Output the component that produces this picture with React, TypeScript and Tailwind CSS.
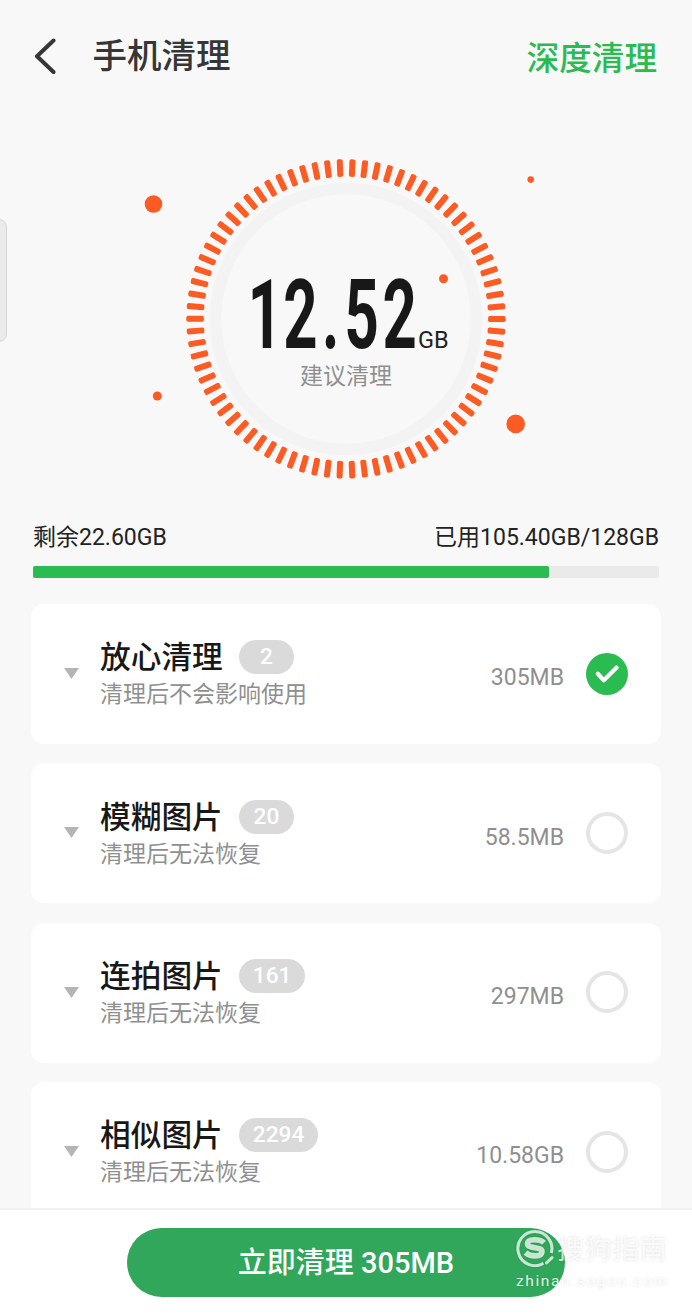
import React from "react";

type Item = {
  title: string;
  count: number;
  note: string;
  size: string;
  checked?: boolean;
};

const items: Item[] = [
  { title: "放心清理", count: 2, note: "清理后不会影响使用", size: "305MB", checked: true },
  { title: "模糊图片", count: 20, note: "清理后无法恢复", size: "58.5MB" },
  { title: "连拍图片", count: 161, note: "清理后无法恢复", size: "297MB" },
  { title: "相似图片", count: 2294, note: "清理后无法恢复", size: "10.58GB" },
];

const TICKS = 78;
const DOTS = [
  [153.5, 204, 8.8],
  [530.7, 179.6, 3.3],
  [443.5, 278.8, 4.5],
  [157.3, 396, 4.5],
  [515.7, 423.9, 9.3],
];

function Gauge() {
  return (
    <svg className="block h-[398px] w-full" viewBox="0 112 692 398">
      <circle cx="346" cy="319" r="130.5" fill="none" stroke="#f3f3f3" strokeWidth="11.5" />
      {Array.from({ length: TICKS }, (_, i) => (
        <rect
          key={i}
          x="488.1"
          y="316"
          width="17.6"
          height="6"
          rx="1.8"
          fill="#fc5b23"
          transform={`rotate(${(i * 360) / TICKS} 346 318.9)`}
        />
      ))}
      {DOTS.map(([x, y, r]) => (
        <circle key={`${x}`} cx={x} cy={y} r={r} fill="#fc5b23" />
      ))}
      <text
        transform="translate(0 347.8) scale(0.62 1)"
        x="399.5 457 519.5 555.5 617"
        y="0"
        fontSize="96.5"
        fontWeight="700"
        fill="#181818"
      >
        12.52
      </text>
      <text x="418" y="347.5" fontSize="23.5" fill="#222222">
        GB
      </text>
      <text x="346" y="384" fontSize="23" textAnchor="middle" fill="#8f8f8f">
        建议清理
      </text>
    </svg>
  );
}

function Check({ checked }: { checked?: boolean }) {
  if (!checked) {
    return <span className="-mt-px block size-[42px] rounded-full border-4 border-[#e5e5e5]" />;
  }
  return (
    <svg className="size-[42px]" viewBox="0 0 42 42">
      <circle cx="21" cy="21" r="21" fill="#2abb51" />
      <path
        d="M11.8 20.8 17.8 27.2 30.6 14.6"
        fill="none"
        stroke="white"
        strokeWidth="4.2"
        strokeLinecap="round"
        strokeLinejoin="round"
      />
    </svg>
  );
}

function Card({ item }: { item: Item }) {
  return (
    <li className="flex h-[140px] shrink-0 items-center rounded-[13px] bg-white pr-[33px] pl-[33px]">
      <svg className="-mt-px h-[11px] w-[15px]" viewBox="0 0 15 11">
        <path d="M0 0H15L7.5 11Z" fill="#b5b5b5" />
      </svg>
      <div className="ml-[21px] flex flex-col pt-[2.6px]">
        <div className="flex h-[34px] items-center">
          <h2 className="pt-[2px] text-[30.7px] leading-[34px] font-medium text-[#181818]">{item.title}</h2>
          <span className="ml-[16px] flex h-[34px] min-w-[55.5px] items-center justify-center rounded-full bg-[#dadada] px-[14px] text-[22.7px] leading-[34px] font-medium text-white">
            {item.count}
          </span>
        </div>
        <p className="mt-[6px] text-[23px] leading-[30px] text-[#8f8f8f]">{item.note}</p>
      </div>
      <span className="mt-[8.5px] mr-[22px] ml-auto text-[23px] leading-[30px] text-[#8f8f8f]">
        {item.size}
      </span>
      <Check checked={item.checked} />
    </li>
  );
}

function Watermark() {
  return (
    <div className="absolute top-[19px] left-[516px] flex flex-col text-white/75 [text-shadow:0_0_3px_rgba(0,0,0,0.13)]">
      <div className="flex h-[38px] items-center gap-[3px]">
        <svg className="size-[38px] drop-shadow-[0_0_1px_rgba(0,0,0,0.15)]" viewBox="0 0 38 38" fill="none" stroke="currentColor">
          <path d="M27.5 34.2A17 17 0 1 1 35.3 24" strokeWidth="3" />
          <path d="M30.5 33.8 36 28.6" strokeWidth="3" strokeLinecap="round" />
          <path d="M28 13.8C24 9.8 11.5 9.5 11.5 14.8C11.5 20.3 26.5 17 26 22.8C25.5 28.5 14 27.8 9.5 23.6" strokeWidth="5.6" />
        </svg>
        <span className="pt-[3px] text-[27.5px] leading-[38px]">搜狗指南</span>
      </div>
      <span className="mt-[3px] text-[15.5px] leading-[22px] tracking-[1.6px] text-white/85">zhinan.sogou.com</span>
    </div>
  );
}

export default function App() {
  return (
    <div className="relative flex h-[1316px] w-[692px] flex-col overflow-hidden bg-[#f8f8f8] font-['Roboto','Noto_Sans_CJK_SC',sans-serif]">
      <header className="flex h-[112px] shrink-0 items-center pr-[35px] pl-[34px]">
        <svg className="h-9 w-6" viewBox="0 0 24 36" fill="none">
          <path d="M19.5 2.5 3 18.3 19.5 34" stroke="#363636" strokeWidth="4" strokeLinecap="round" strokeLinejoin="round" />
        </svg>
        <h1 className="ml-[34.5px] text-[34.5px] leading-[48px] font-medium text-[#363636]">手机清理</h1>
        <button className="mt-[5px] ml-auto text-[32.6px] leading-[48px] font-medium text-[#2abb51]">深度清理</button>
      </header>

      <Gauge />

      <section className="shrink-0 pr-[33px] pl-[33px]">
        <div className="flex h-[56px] items-center justify-between text-[23px] leading-[30px] text-[#222222]">
          <span>剩余22.60GB</span>
          <span>已用105.40GB/128GB</span>
        </div>
        <div className="h-3 rounded-[2px] bg-[#eaeaea]">
          <div className="h-3 w-[515.5px] rounded-[2px] bg-[#2abb51]" />
        </div>
      </section>

      <ul className="flex min-h-0 flex-1 flex-col gap-[19.4px] overflow-hidden px-[31px] pt-[26px]">
        {items.map((item) => (
          <Card key={item.title} item={item} />
        ))}
      </ul>

      <footer className="relative flex h-[108px] shrink-0 justify-center border-t-2 border-[#f0f0f0] bg-white pt-[17.5px]">
        <button className="h-[69.5px] w-[438px] rounded-full bg-[#30a75a] pt-px text-[29px] leading-[69px] font-medium text-white">
          立即清理 305MB
        </button>
        <Watermark />
      </footer>

      <div className="absolute top-[219px] left-[-10px] h-[123px] w-[17px] rounded-[8px] border-[1.5px] border-[#d6d6d6] bg-[#ebebeb]" />
    </div>
  );
}
